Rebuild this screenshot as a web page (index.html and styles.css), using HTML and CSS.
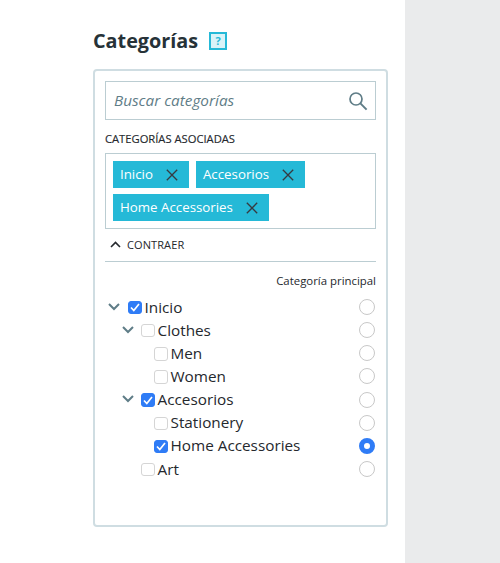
FILE: index.html
```html
<!DOCTYPE html>
<html lang="es">
<head>
<meta charset="utf-8">
<title>Categorías</title>
<link rel="stylesheet" href="styles.css">
</head>
<body>
<div class="page">
  <main class="main">
    <h2 class="title">Categorías <span class="help">?</span></h2>
    <section class="card">
      <div class="search">
        <span class="search-text">Buscar categorías</span>
        <svg class="search-icon" width="20" height="20" viewBox="0 0 20 20" fill="none" stroke="#5f7d87" stroke-width="1.7"><circle cx="8" cy="8" r="6"/><path d="M12.4 12.4L18.6 18.6" stroke-width="2"/></svg>
      </div>
      <div class="label">CATEGORÍAS ASOCIADAS</div>
      <div class="tags">
        <span class="tag">Inicio<svg class="x" width="12" height="12" viewBox="0 0 12 12" stroke="#363a41" stroke-width="1.3"><path d="M.8.8l10.4 10.4M11.2.8L.8 11.2"/></svg></span>
        <span class="tag">Accesorios<svg class="x" width="12" height="12" viewBox="0 0 12 12" stroke="#363a41" stroke-width="1.3"><path d="M.8.8l10.4 10.4M11.2.8L.8 11.2"/></svg></span>
        <span class="tag">Home Accessories<svg class="x" width="12" height="12" viewBox="0 0 12 12" stroke="#363a41" stroke-width="1.3"><path d="M.8.8l10.4 10.4M11.2.8L.8 11.2"/></svg></span>
      </div>
      <div class="collapse">
        <svg width="11" height="7" viewBox="0 0 11 7" fill="none" stroke="#25282d" stroke-width="1.6"><path d="M1 6l4.5-4.5L10 6"/></svg>
        <span>CONTRAER</span>
      </div>
      <div class="principal">Categoría principal</div>
      <ul class="tree">
        <li class="row lv0"><svg class="chev" width="12" height="8" viewBox="0 0 12 8" fill="none" stroke="#5f7d87" stroke-width="2"><path d="M1 1l5 5 5-5"/></svg><span class="check on"><svg width="10" height="9" viewBox="0 0 10 9" fill="none" stroke="#fff" stroke-width="1.7"><path d="M1 4.5l2.8 3L9 1"/></svg></span><span class="name">Inicio</span><span class="radio"></span></li>
        <li class="row lv1"><svg class="chev" width="12" height="8" viewBox="0 0 12 8" fill="none" stroke="#5f7d87" stroke-width="2"><path d="M1 1l5 5 5-5"/></svg><span class="check"></span><span class="name">Clothes</span><span class="radio"></span></li>
        <li class="row lv2"><span class="check"></span><span class="name">Men</span><span class="radio"></span></li>
        <li class="row lv2"><span class="check"></span><span class="name">Women</span><span class="radio"></span></li>
        <li class="row lv1"><svg class="chev" width="12" height="8" viewBox="0 0 12 8" fill="none" stroke="#5f7d87" stroke-width="2"><path d="M1 1l5 5 5-5"/></svg><span class="check on"><svg width="10" height="9" viewBox="0 0 10 9" fill="none" stroke="#fff" stroke-width="1.7"><path d="M1 4.5l2.8 3L9 1"/></svg></span><span class="name">Accesorios</span><span class="radio"></span></li>
        <li class="row lv2"><span class="check"></span><span class="name">Stationery</span><span class="radio"></span></li>
        <li class="row lv2"><span class="check on"><svg width="10" height="9" viewBox="0 0 10 9" fill="none" stroke="#fff" stroke-width="1.7"><path d="M1 4.5l2.8 3L9 1"/></svg></span><span class="name">Home Accessories</span><span class="radio on"></span></li>
        <li class="row lv1 leaf"><span class="check"></span><span class="name">Art</span><span class="radio"></span></li>
      </ul>
    </section>
  </main>
  <aside class="side"></aside>
</div>
</body>
</html>
```
FILE: styles.css
```css
* { box-sizing: border-box; }
html, body { margin: 0; height: 100%; }
body { font-family: "Open Sans", sans-serif; color: #25282d; background: #fff; overflow: hidden; }
.page { display: flex; height: 563px; }
.main { width: 405px; padding: 27px 17px 0 93px; }
.side { flex: 1; background: #eaebec; }
.title { margin: 0 0 14px; display: flex; align-items: center; gap: 5px; height: 28px; font-size: 19.8px; font-weight: 700; line-height: 28px; color: #263238; }
.help { margin-left: 6px; width: 18px; height: 18px; border: 2px solid #25b9d7; background: #d9f3f8; color: #25b9d7; font-size: 11px; line-height: 14px; text-align: center; font-weight: 700; }
.card { height: 458px; border: 2px solid #cfdde2; border-radius: 4px; padding: 10px 10px 0 10px; }
.search { height: 39px; border: 1px solid #bbcdd2; display: flex; align-items: center; justify-content: space-between; padding: 0 7px 0 8px; }
.search-text { font-size: 15.3px; font-style: italic; color: #5f7d87; margin-bottom: 2px; }
.label { margin-top: 10px; height: 18px; font-size: 11.2px; font-weight: 400; line-height: 18px; color: #25282d; -webkit-text-stroke: 0.15px #25282d; }
.tags { margin-top: 5px; height: 76px; border: 1px solid #bbcdd2; padding: 7px 7px 0 7px; display: flex; flex-wrap: wrap; align-content: flex-start; gap: 6px 7px; }
.tag { height: 27px; background: #25b9d7; color: #fff; font-size: 13.3px; line-height: 25px; font-weight: 500; padding: 0 11px 0 7px; display: flex; align-items: center; gap: 13px; }
.x { flex: none; }
.collapse { height: 33px; border-bottom: 1px solid #bbcdd2; display: flex; align-items: center; gap: 6px; padding: 0 0 2px 5px; font-size: 11px; letter-spacing: .1px; }
.principal { margin-top: 10px; height: 18px; text-align: right; font-size: 11.4px; line-height: 18px; color: #25282d; }
.tree { list-style: none; margin: 5px 0 0; padding: 0; }
.row { height: 23.15px; display: flex; align-items: center; font-size: 15.3px; color: #25282d; }
.lv0 { padding-left: 3px; }
.lv0 .chev { margin-right: 8px; }
.lv1 { padding-left: 17px; }
.lv2 { padding-left: 49px; }
.lv1.leaf { padding-left: 36px; }
.chev { flex: none; margin-right: 7px; }
.check { flex: none; width: 13.5px; height: 13.5px; border: 1.5px solid #d5d5d5; border-radius: 3px; background: #fff; margin-right: 3px; margin-top: 2px; display: flex; align-items: center; justify-content: center; }
.check.on { background: #2f7cf6; border-color: #2f7cf6; }
.name { flex: 1; line-height: 20px; }
.radio { flex: none; width: 16px; height: 16px; border: 1.5px solid #c8c8c8; border-radius: 50%; background: #fff; margin-right: 1px; margin-top: 1px; }
.radio.on { border: 5px solid #2f7cf6; }
```
